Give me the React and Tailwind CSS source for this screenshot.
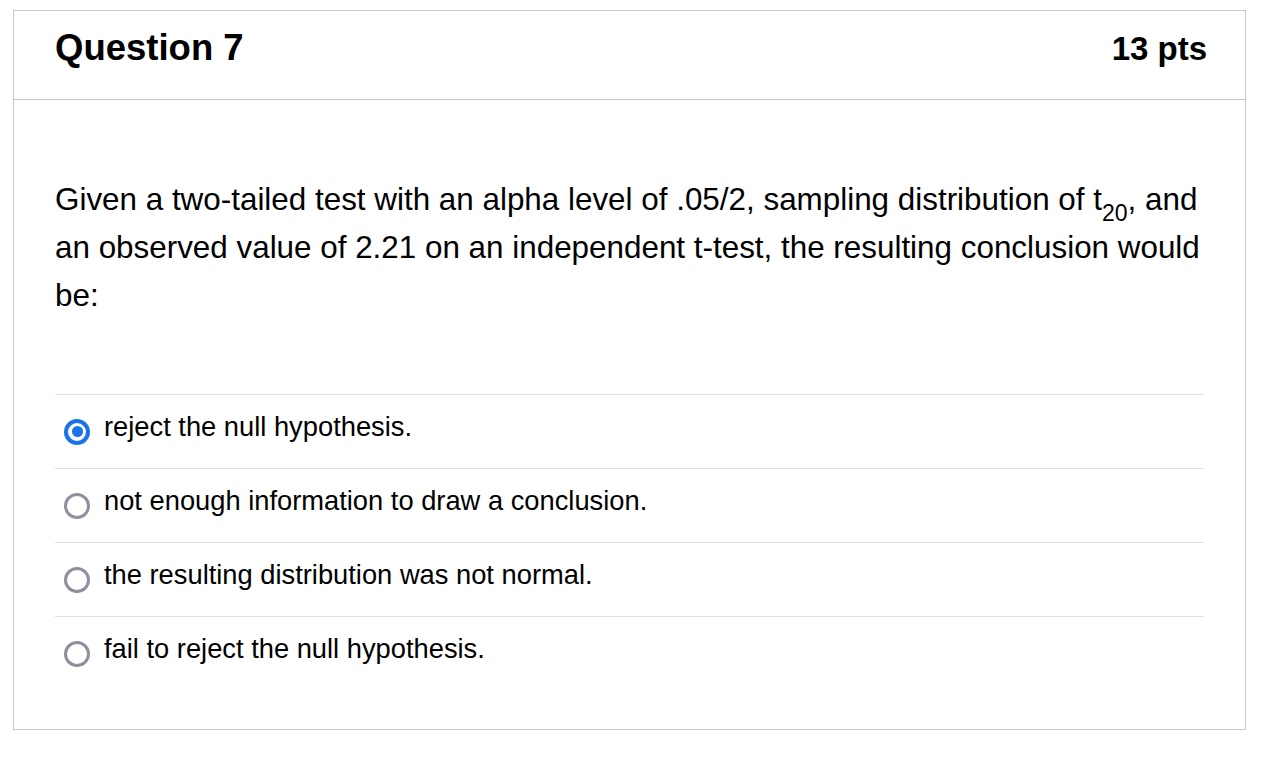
const options = [
  { label: 'reject the null hypothesis.', checked: true },
  { label: 'not enough information to draw a conclusion.', checked: false },
  { label: 'the resulting distribution was not normal.', checked: false },
  { label: 'fail to reject the null hypothesis.', checked: false },
];

function Radio({ checked }) {
  if (checked) {
    return (
      <span className="w-[26px] h-[26px] rounded-full bg-[#1a73e8] flex items-center justify-center shrink-0">
        <span className="w-[18px] h-[18px] rounded-full bg-white flex items-center justify-center">
          <span className="w-[11px] h-[11px] rounded-full bg-[#1a73e8]" />
        </span>
      </span>
    );
  }
  return (
    <span className="w-[26px] h-[26px] rounded-full border-[3px] border-[#8f8f9d] bg-white shrink-0" />
  );
}

export default function App() {
  return (
    <div
      className="min-h-screen bg-white pt-[10px] pl-[13px] text-black"
      style={{ fontFamily: '"Liberation Sans", Arial, sans-serif' }}
    >
      <div className="w-[1233px] border border-[#c8c8c8]">
        {/* Header */}
        <div className="h-[89px] flex items-center justify-between pl-[41px] pr-[38px] pb-[14px] border-b border-[#c8c8c8]">
          <h2 className="text-[36.5px] font-bold leading-none">Question 7</h2>
          <span className="text-[33px] font-bold leading-none">13 pts</span>
        </div>

        {/* Body */}
        <div className="px-[41px] pt-[76px] pb-[39px]">
          <p className="text-[31.4px] leading-[48px]">
            Given a two-tailed test with an alpha level of .05/2, sampling distribution of t
            <span className="relative top-[11px] text-[23px] leading-none">20</span>, and an
            observed value of 2.21 on an independent t-test, the resulting conclusion would be:
          </p>

          <div className="mt-[74px]">
            {options.map((opt) => (
              <label
                key={opt.label}
                className="h-[74px] flex items-center border-t border-[#e0e0e0] pl-[9px] gap-[14px]"
              >
                <Radio checked={opt.checked} />
                <span className="text-[27.3px] leading-none mb-[10px]">{opt.label}</span>
              </label>
            ))}
          </div>
        </div>
      </div>
    </div>
  );
}
